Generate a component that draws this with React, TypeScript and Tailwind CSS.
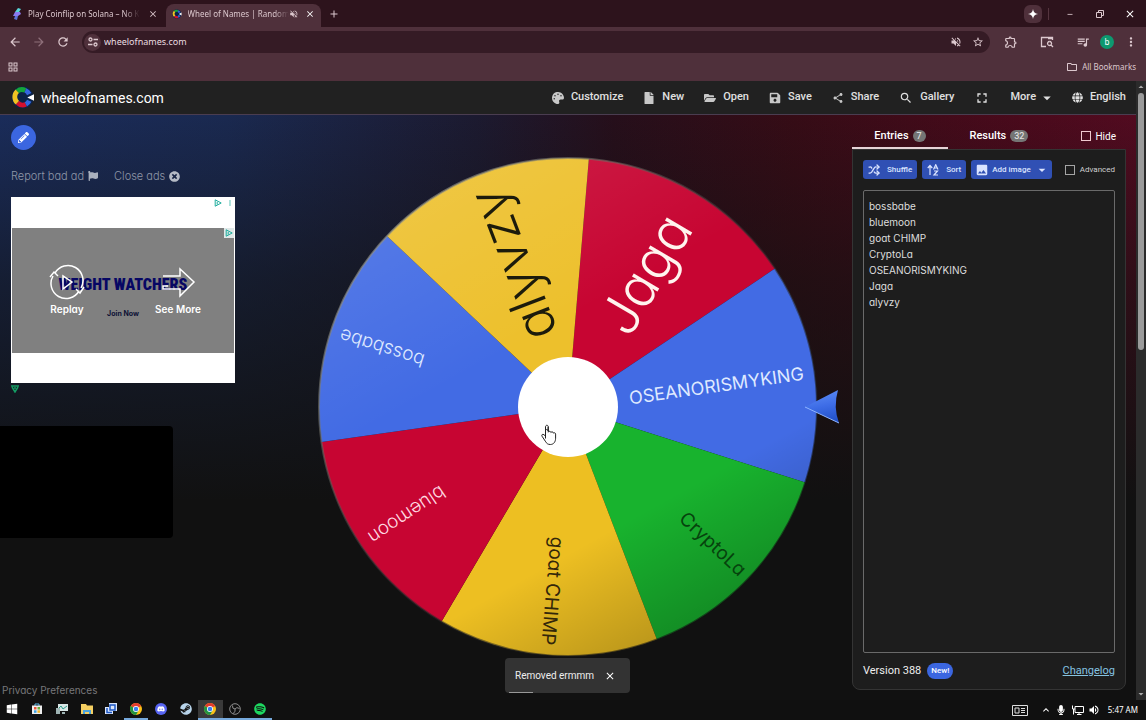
import {
  FaPalette, FaFile, FaFolderOpen, FaSave, FaPencilAlt, FaWindows, FaDiscord, FaSteam, FaSpotify, FaMicrophone, FaFlag, FaTimesCircle, FaGlobe,
} from "react-icons/fa";
import {
  MdShare, MdSearch, MdFullscreen, MdImage, MdArrowDropDown, MdArrowDropUp, MdClose, MdAdd,
  MdArrowBack, MdArrowForward, MdRefresh, MdOutlineExtension, MdStarBorder, MdVolumeOff, MdMoreVert, MdOutlineFolder, MdQueueMusic,
  MdOutlineGridView, MdMinimize, MdExpandLess, MdVolumeUp,
} from "react-icons/md";
import { Shuffle } from "lucide-react";

const round = "font-[Inter,'Liberation_Sans',sans-serif] [font-feature-settings:'cv11']";

type Slice = { name: string; color: string; ink: string; size: number; end: number; weight: number };

const slices: Slice[] = [
  { name: "Jaga", color: "#c70532", ink: "#fff4ee", size: 54, end: 218, weight: 300 },
  { name: "OSEANORISMYKING", color: "#426be4", ink: "#dfe9ff", size: 18, end: 238, weight: 400 },
  { name: "CryptoLa", color: "#18b32e", ink: "#06430d", size: 19, end: 241, weight: 400 },
  { name: "goat CHIMP", color: "#edbf22", ink: "#33270a", size: 19, end: 239, weight: 400 },
  { name: "bluemoon", color: "#c70532", ink: "#ffdbe2", size: 19, end: 238, weight: 300 },
  { name: "bossbabe", color: "#426be4", ink: "#dfe9ff", size: 19, end: 239, weight: 300 },
  { name: "alyvzy", color: "#edc02c", ink: "#1c1b0c", size: 52, end: 232, weight: 300 },
];

const START = -85.2;
const STEP = 360 / 7;
const R = 249;

function point(deg: number, r: number) {
  const a = (deg * Math.PI) / 180;
  return `${(255 + r * Math.cos(a)).toFixed(2)} ${(255 + r * Math.sin(a)).toFixed(2)}`;
}

function Wheel() {
  return (
    <svg viewBox="0 0 530 510" className="w-full max-w-[530px]" role="img" aria-label="Wheel">
      <defs>
        <linearGradient id="shade" x1="0.25" y1="0.05" x2="0.75" y2="0.95">
          <stop offset="0" stopColor="#fff" stopOpacity="0.1" />
          <stop offset="0.35" stopColor="#fff" stopOpacity="0" />
          <stop offset="0.75" stopColor="#000" stopOpacity="0" />
          <stop offset="1" stopColor="#000" stopOpacity="0.22" />
        </linearGradient>
        <linearGradient id="rim" x1="0" y1="0" x2="1" y2="1">
          <stop offset="0" stopColor="#b9b9a8" stopOpacity="0.7" />
          <stop offset="0.5" stopColor="#333" stopOpacity="0.5" />
          <stop offset="1" stopColor="#000" stopOpacity="0.6" />
        </linearGradient>
        <linearGradient id="arrow" x1="0.4" y1="0" x2="0.6" y2="1">
          <stop offset="0" stopColor="#5c8cf5" />
          <stop offset="0.5" stopColor="#3d6ce6" />
          <stop offset="1" stopColor="#2150c8" />
        </linearGradient>
      </defs>
      {slices.map((s, i) => {
        const a = START + i * STEP;
        return <path key={s.name} d={`M255 255L${point(a, R)}A${R} ${R} 0 0 1 ${point(a + STEP, R)}Z`} fill={s.color} />;
      })}
      <circle cx="255" cy="255" r={R} fill="url(#shade)" stroke="url(#rim)" strokeWidth="2" />
      {slices.map((s, i) => (
        <text
          key={s.name}
          transform={`translate(255 255) rotate(${START + (i + 0.5) * STEP})`}
          x={s.end}
          y={s.size * 0.34}
          textAnchor="end"
          fontSize={s.size}
          fontWeight={s.weight}
          fill={s.ink}
          className={round}
        >
          {s.name}
        </text>
      ))}
      <circle cx="255" cy="255" r="50" fill="#fff" />
      <path d="M492 255L525 238Q520 255 526 271Z" fill="url(#arrow)" />
      <path d="M492 255L526 271" stroke="#8fb4ff" strokeWidth="1" fill="none" />
      <path
        d="M232.500 286.500v-7.500c0-2 2.600-2 2.600 0v-4.200M232.500 284v-9c0-2.300 2.800-2.300 2.800 0v5.200c.3-1.300 2.500-1.100 2.600.3 .5-1 2.400-.8 2.500.6 .7-.7 2.200-.3 2.200 1v4.100c0 3.500-1.900 6.300-5.200 6.300-2.700 0-3.700-1-5.100-3.300l-3.300-5c-.8-1.500.8-2.600 2-1.400z"
        fill="#fff"
        stroke="#222"
        strokeWidth="1"
        strokeLinejoin="round"
      />
    </svg>
  );
}

function WheelLogo({ className }: { className: string }) {
  return (
    <svg viewBox="0 0 24 24" className={className} aria-hidden="true">
      <circle cx="12" cy="12" r="11.500" fill="#0b2348" />
      <g fill="none" strokeWidth="5">
        <path d="M6.500 5.500A8 8 0 0 1 15 4.600" stroke="#14a53a" />
        <path d="M6.800 17.500A8 8 0 0 1 6.500 5.500" stroke="#f0c322" />
        <path d="M15.500 19.200A8 8 0 0 1 6.800 17.500" stroke="#d5102f" />
        <path d="M15 4.600A8 8 0 0 1 19 8.500M19 15.500A8 8 0 0 1 15.500 19.200" stroke="#3466e0" />
      </g>
      <path d="M17 12L24 8.500V15.500Z" fill="#fff" />
    </svg>
  );
}

function Chrome({ className }: { className: string }) {
  return (
    <svg viewBox="0 0 24 24" className={className} aria-hidden="true">
      <circle cx="12" cy="12" r="12" fill="#fbc116" />
      <path d="M12 12L1.600 6A12 12 0 0 1 22.400 6Z" fill="#e33b2e" />
      <path d="M12 12L1.600 6A12 12 0 0 0 12 24L17.200 15Z" fill="#229342" />
      <circle cx="12" cy="12" r="6" fill="#fff" />
      <circle cx="12" cy="12" r="4.500" fill="#3b7ded" />
    </svg>
  );
}

function AdChoices({ className }: { className: string }) {
  return (
    <svg viewBox="0 0 10 10" className={className} fill="none" stroke="#16a99a" strokeWidth="1.200" aria-hidden="true">
      <path d="M1.500 1L9 5L1.500 9ZM4 3.500V7" />
    </svg>
  );
}

function SortIcon() {
  return (
    <svg viewBox="0 0 24 24" className="size-3" fill="none" stroke="currentColor" strokeWidth="2.400" aria-hidden="true">
      <path d="M6 22V3M1.500 8L6 3L10.500 8M13 11L17.500 1.500L22 11M14.500 8H20.500M14 14H21L14 22H22" />
    </svg>
  );
}

function SiteControls() {
  return (
    <svg viewBox="0 0 12 12" className="size-3" fill="none" stroke="currentColor" strokeWidth="1.300" aria-hidden="true">
      <circle cx="3.500" cy="3.500" r="1.500" />
      <circle cx="8.500" cy="8.500" r="1.500" />
      <path d="M6.500 3.500H11M1 8.500H5.500" />
    </svg>
  );
}

function Divider() {
  return <span className="h-3 w-px bg-[#7a5964]" />;
}

function BrowserChrome() {
  return (
    <div className="shrink-0 bg-[#4f303b] font-['Noto_Sans',sans-serif] text-[8px] text-[#dcc8ce]">
      <div className="flex h-[27px] items-center bg-[#2d131c]">
        <div className="flex h-full w-[166px] items-center gap-1.5 pr-2 pl-3">
          <svg viewBox="0 0 10 12" className="h-3 w-2.5" aria-hidden="true">
            <path d="M6 0L9 1L7 4H3Z" fill="#58d5d8" />
            <path d="M3 4H8L9 6L6 8H1Z" fill="#8a7af0" />
            <path d="M3 8H6L5 12L2 11Z" fill="#5a72d8" />
          </svg>
          <span className="whitespace-nowrap [mask-image:linear-gradient(90deg,#000_85%,transparent)]">Play Coinflip on Solana – No K</span>
          <button aria-label="Close Coinflip tab" className="ml-auto"><MdClose className="size-2.5" /></button>
        </div>
        <div className="mt-1 flex h-[23px] w-[155px] items-center rounded-t-lg bg-[#4f303b] pr-1.5 pb-1 pl-1.5">
          <WheelLogo className="size-2.5" />
          <span className="ml-1.5 whitespace-nowrap [mask-image:linear-gradient(90deg,#000_85%,transparent)]">Wheel of Names | Random</span>
          <MdVolumeOff className="ml-auto size-2.5" />
          <button aria-label="Close wheel tab" className="ml-1.5 text-white"><MdClose className="size-2.5" /></button>
        </div>
        <button aria-label="New tab" className="ml-[7px]"><MdAdd className="size-3" /></button>
        <div className="ml-auto flex items-center pr-2.5">
          <button aria-label="Assistant" className="grid size-[18px] place-items-center rounded-md bg-[#4f303b] text-white">
            <svg viewBox="0 0 10 10" className="size-2.5" fill="currentColor"><path d="M5 0Q5.500 4.500 10 5Q5.500 5.500 5 10Q4.500 5.500 0 5Q4.500 4.500 5 0Z" /></svg>
          </button>
          <span className="ml-1.5 h-3 w-px bg-[#55353f]" />
          <button aria-label="Minimize" className="ml-4"><MdMinimize className="mb-1.5 size-2.5" /></button>
          <button aria-label="Restore" className="ml-[21px]">
            <svg viewBox="0 0 8 8" className="size-2" fill="none" stroke="currentColor"><path d="M.5 2.500H5.500V7.500H.5ZM2.500 2.500V.5H7.500V5.500H5.500" /></svg>
          </button>
          <button aria-label="Close window" className="ml-5 text-white"><MdClose className="size-3" /></button>
        </div>
      </div>
      <div className="flex h-[30px] items-center pr-2 pl-2">
        <button aria-label="Back"><MdArrowBack className="size-3.5" /></button>
        <button aria-label="Forward" className="ml-2.5 text-[#8f707b]"><MdArrowForward className="size-3.5" /></button>
        <button aria-label="Reload" className="ml-2.5"><MdRefresh className="size-3.5" /></button>
        <div className="ml-3 flex h-[22px] flex-1 items-center rounded-full bg-[#351b25] pr-1.5 pl-0.5">
          <span className="grid size-[17px] place-items-center rounded-full bg-[#4f303b]"><SiteControls /></span>
          <input aria-label="Address" defaultValue="wheelofnames.com" className="ml-[3px] min-w-0 flex-1 bg-transparent text-[9px] text-[#eadde1] outline-none" />
          <MdVolumeOff className="size-3" />
          <MdStarBorder className="ml-2.5 size-3" />
        </div>
        <button aria-label="Extensions" className="ml-3.5"><MdOutlineExtension className="size-3.5" /></button>
        <span className="ml-2.5"><Divider /></span>
        <button aria-label="Side search" className="ml-3">
          <svg viewBox="0 0 14 12" className="h-3 w-3.5" fill="none" stroke="currentColor" strokeWidth="1.300"><path d="M6 10.500H1.500V1.500H12.500V4M8 2.500H12.500M9.500 5.500a2 2 0 1 0 .1 0M11 9L13 11" /></svg>
        </button>
        <span className="ml-2.5"><Divider /></span>
        <button aria-label="Media" className="ml-3"><MdQueueMusic className="size-3.5" /></button>
        <span className="ml-2.5 grid size-3.5 place-items-center rounded-full bg-[#0d9970] text-[8px] text-white">b</span>
        <button aria-label="Menu" className="ml-2.5"><MdMoreVert className="size-3.5" /></button>
      </div>
      <div className="flex h-6 items-center pr-2.5 pb-1 pl-[7px]">
        <button aria-label="Apps"><MdOutlineGridView className="size-3" /></button>
        <span className="ml-auto"><Divider /></span>
        <a href="#bookmarks" className="ml-2.5 flex items-center gap-1"><MdOutlineFolder className="size-3" />All Bookmarks</a>
      </div>
    </div>
  );
}

const navItems = [
  { label: "Customize", Icon: FaPalette },
  { label: "New", Icon: FaFile },
  { label: "Open", Icon: FaFolderOpen },
  { label: "Save", Icon: FaSave },
  { label: "Share", Icon: MdShare },
  { label: "Gallery", Icon: MdSearch },
];

function SiteHeader() {
  return (
    <header className="flex h-[33px] shrink-0 items-center bg-[#212121] pr-2.5 pl-[11px] text-[#e0e0e0]">
      <a href="#home" className="flex items-center gap-[7px] text-sm text-white">
        <WheelLogo className="size-[23px]" />
        wheelofnames.com
      </a>
      <nav className="ml-auto flex items-center gap-5 text-[11px] font-medium">
        {navItems.map(({ label, Icon }) => (
          <button key={label} className="flex items-center gap-[7px]">
            <Icon className={label === "Gallery" ? "size-3.5 text-[#dedede]" : "size-3 text-[#c8c8c8]"} />
            {label}
          </button>
        ))}
        <button aria-label="Fullscreen"><MdFullscreen className="size-4" /></button>
        <button className="flex items-center gap-0.5">More<MdArrowDropDown className="size-[18px]" /></button>
        <button className="-ml-1 flex items-center gap-[7px]"><FaGlobe className="size-[11px]" />English</button>
      </nav>
    </header>
  );
}

function AdColumn() {
  return (
    <aside className={`${round} flex w-[313px] shrink-0 flex-col items-start pt-2.5 text-[#8f97a8]`}>
      <button aria-label="Edit title" className="ml-[11px] grid size-[25px] place-items-center rounded-full bg-[#3b66e0] text-white">
        <FaPencilAlt className="size-[11px]" />
      </button>
      <div className="mt-[17px] ml-[11px] flex h-[18px] items-center gap-4 text-[11px] font-light">
        <button className="flex items-center gap-1">Report bad ad<FaFlag className="size-2.5 text-[#a9b0bd]" /></button>
        <button className="flex items-center gap-1">Close ads<FaTimesCircle className="size-[11px] text-[#b5bac5]" /></button>
      </div>
      <div className="mt-3 ml-[11px] flex h-[186px] w-[224px] flex-col bg-white px-px">
        <div className="flex h-[31px] justify-end gap-1 pt-0.5">
          <AdChoices className="size-2" />
          <MdMoreVert className="size-2 text-[#16a99a]" />
        </div>
        <div className="relative flex h-[125px] flex-col items-center bg-[#808080]">
          <span className="absolute top-0 right-0 bg-[#e0e8e8] p-px"><AdChoices className="size-2" /></span>
          <strong className="mt-[43px] font-['Liberation_Sans_Narrow','Roboto_Condensed','DejaVu_Sans_Condensed',sans-serif] text-base leading-[28px] font-black whitespace-nowrap text-[#070764]">WEIGHT WATCHERS</strong>
          <span className="mt-2.5 font-[Inter,sans-serif] text-[7px] leading-[10px] font-bold text-[#0c1034]">Join Now</span>
          <button className="absolute top-[36px] left-[35px] flex w-10 flex-col items-center font-[Inter,sans-serif] text-[10px] leading-[14px] font-semibold text-white">
            <svg viewBox="0 0 36 36" className="size-9" fill="none" stroke="currentColor" strokeWidth="1.500">
              <path d="M6 9A15 15 0 0 1 32 24M30 27A15 15 0 0 1 4 12M1 13L5 8L9 12M27 25L31 29L35 23M14 12V25L23 18Z" />
            </svg>
            <span className="mt-0.5">Replay</span>
          </button>
          <button className="absolute top-[36px] left-[138px] flex w-14 flex-col items-center font-[Inter,sans-serif] text-[10px] leading-[14px] font-semibold whitespace-nowrap text-white">
            <svg viewBox="0 0 36 36" className="size-9" fill="none" stroke="currentColor" strokeWidth="1.500">
              <path d="M3 12H20V5L34 18L20 32V25H3V22H8" />
            </svg>
            <span className="mt-0.5">See More</span>
          </button>
        </div>
      </div>
      <svg viewBox="0 0 8 8" className="mt-0.5 ml-[11px] size-2" fill="none" stroke="#149b63" strokeWidth="1.500"><path d="M0 1H8M1 2L4 7L7 2M4 2V4" /></svg>
      <div className="mt-[33px] h-28 w-[173px] rounded-r-sm bg-black" />
      <a href="#privacy" className="mt-auto pb-0.5 pl-0.5 text-[10px] text-[#77777a]">Privacy Preferences</a>
    </aside>
  );
}

const entryText = [5, 4, 3, 2, 1, 0, 6].map((i) => slices[i].name).join("\n");

function EntriesPanel() {
  return (
    <aside className="mt-2 mr-2.5 mb-2.5 flex w-[274px] shrink-0 flex-col">
      <div className="flex h-[26px] items-stretch text-[11px] font-medium text-white">
        <button className="flex w-24 items-center justify-center gap-1 border-b-2 border-[#e6d4d7] pt-0.5">
          Entries<span className="rounded-full bg-[#757575] px-1 text-[9px] leading-3 text-[#ddd]">7</span>
        </button>
        <button className="flex w-[102px] items-center justify-center gap-1">
          Results<span className="rounded-full bg-[#757575] px-1 text-[9px] leading-3 text-[#ddd]">32</span>
        </button>
        <label className="ml-auto flex items-center gap-1 pr-2.5 text-[10px] font-normal">
          <input type="checkbox" className="size-2.5 appearance-none border border-[#f0c8cf]" />Hide
        </label>
      </div>
      <div className="flex flex-1 flex-col rounded-b-lg border border-[#343434] bg-[#1d1d1d] px-2.5 pt-2.5">
        <div className="flex h-[19px] items-stretch gap-[5px] text-[8px] font-medium whitespace-nowrap text-[#dbe4ff]">
          <button className="flex items-center gap-[7px] rounded-[3px] bg-[#3050b4] px-[5px]"><Shuffle className="size-3" strokeWidth={2.5} />Shuffle</button>
          <button className="flex items-center gap-[7px] rounded-[3px] bg-[#3050b4] px-[5px]"><SortIcon />Sort</button>
          <button className="flex items-center gap-[3px] rounded-[3px] bg-[#3050b4] pr-0.5 pl-1"><MdImage className="size-3.5" />Add image<MdArrowDropDown className="size-4" /></button>
          <label className="ml-auto flex items-center gap-[5px] font-normal text-[#d0d0d0]">
            <input type="checkbox" className="size-2.5 appearance-none border border-[#a5a5a5]" />Advanced
          </label>
        </div>
        <textarea
          aria-label="Entries"
          defaultValue={entryText}
          spellCheck={false}
          className={`${round} mt-[11px] w-full flex-1 resize-none rounded-xs border border-[#6a6a6a] bg-transparent px-[5px] py-[7px] text-[10px] leading-4 text-[#dedede] outline-none`}
        />
        <div className="flex h-9 items-center text-[11px] text-[#eee]">
          Version 388
          <span className="ml-1.5 rounded-full bg-[#3b66e0] px-1 text-[8px] leading-4 font-medium text-white">New!</span>
          <a href="#changelog" className="ml-auto text-[#85c3e0] underline">Changelog</a>
        </div>
      </div>
    </aside>
  );
}

function Toast() {
  return (
    <div role="status" className="absolute bottom-[7px] left-[505px] flex h-[35px] w-[125px] items-center rounded bg-[#333] px-2.5 text-[10px] text-[#eee]">
      <span className="whitespace-nowrap">Removed ermmm</span>
      <button aria-label="Dismiss" className="mr-1 ml-auto text-white"><MdClose className="size-3" /></button>
      <span className="absolute bottom-0 left-1 h-px w-6 bg-[#999]" />
    </div>
  );
}

const cell = "grid h-full flex-1 place-items-center border-b-2";

function Taskbar() {
  return (
    <footer className="flex h-5 shrink-0 items-center bg-[#101010] text-white">
      <div className="flex h-full w-[272px]">
        <button aria-label="Start" className={`${cell} border-transparent`}><FaWindows className="size-3" /></button>
        <button aria-label="Store" className={`${cell} border-transparent`}>
          <svg viewBox="0 0 12 12" className="size-3"><path d="M4 3V1H8V3" fill="none" stroke="#5cb8ea" /><path d="M1 2.500H11V11H1Z" fill="#eee" /><path d="M3 4H5.500V6.500H3Z" fill="#e8543b" /><path d="M6.500 4H9V6.500H6.500Z" fill="#6cae3a" /><path d="M3 7.300H5.500V9.800H3Z" fill="#3aa0e0" /><path d="M6.500 7.300H9V9.800H6.500Z" fill="#f1b62c" /></svg>
        </button>
        <button aria-label="Monitor" className={`${cell} border-transparent`}>
          <svg viewBox="0 0 12 12" className="size-3"><path d="M2 1H12V8H2Z" fill="#d9e6e6" /><path d="M3 5L5 3L7 6L11 3" fill="none" stroke="#2b9c8b" /><path d="M0 5H4V11H0ZM6 9H9V11H6Z" fill="#9fb4b4" /></svg>
        </button>
        <button aria-label="Files" className={`${cell} border-transparent`}>
          <svg viewBox="0 0 12 12" className="size-3"><path d="M0 1H5L6 2.500H12V11H0Z" fill="#f5cf62" /><path d="M2 7H10V11H8V9H4V11H2Z" fill="#4ba3dc" /></svg>
        </button>
        <button aria-label="Remote" className={`${cell} border-transparent`}>
          <svg viewBox="0 0 12 12" className="size-3"><path d="M4 0H12V8H8V11H0V4H4Z" fill="#dbe6fb" /><path d="M5 2H10V7H5ZM2 5V9.500H7" fill="none" stroke="#1d57c4" strokeWidth="1.500" /></svg>
        </button>
        <button aria-label="Chrome" className={`${cell} border-[#76a9dc]`}><Chrome className="size-3" /></button>
        <button aria-label="Discord" className={`${cell} border-transparent`}>
          <span className="grid size-3 place-items-center rounded-full bg-[#5865f2]"><FaDiscord className="size-2" /></span>
        </button>
        <button aria-label="Steam" className={`${cell} border-transparent`}><FaSteam className="size-3 text-[#b8d4ea]" /></button>
        <button aria-label="Chrome window" className={`${cell} border-[#76a9dc] bg-[#3a3a3a]`}><Chrome className="size-3" /></button>
        <button aria-label="OBS" className={`${cell} border-[#76a9dc]`}>
          <svg viewBox="0 0 12 12" className="size-3" fill="none" stroke="#8d8d8d"><circle cx="6" cy="6" r="5.300" /><path d="M6 6Q3 6 3.500 2.500M6 6Q7.500 3.500 10.500 5.500M6 6Q7 9 4 10.500" /></svg>
        </button>
        <button aria-label="Spotify" className={`${cell} border-[#76a9dc]`}><FaSpotify className="size-3 text-[#1ed760]" /></button>
      </div>
      <div className="ml-auto flex items-center pr-2">
        <svg viewBox="0 0 16 11" className="h-[11px] w-4" fill="none" stroke="#ddd"><path d="M.5 .5H15.500V10.500H.5ZM3 3H7V8H3ZM9 3.500H13M9 5.500H13M9 7.500H13" /></svg>
        <MdExpandLess className="ml-3 size-3" />
        <FaMicrophone className="ml-1 size-2.5" />
        <svg viewBox="0 0 12 10" className="ml-1.5 h-2.5 w-3" fill="none" stroke="currentColor"><path d="M3 1.500H11.500V7.500H3ZM7 7.500V9.500M5 9.500H9.500M.5 .5V4H3M1.500 4V9.500" /></svg>
        <MdVolumeUp className="ml-1 size-3" />
        <time className="ml-2 font-['Noto_Sans',sans-serif] text-[8px] whitespace-nowrap">5:47 AM</time>
      </div>
    </footer>
  );
}

export default function App() {
  return (
    <div className="flex h-screen flex-col overflow-hidden bg-[#111] font-[Roboto,sans-serif]">
      <BrowserChrome />
      <div className="flex min-h-0 flex-1">
        <div className="flex min-w-0 flex-1 flex-col">
          <SiteHeader />
          <main className="relative flex min-h-0 flex-1 border-t border-[#4a3d50] bg-[linear-gradient(180deg,#11111100_0%,#11111188_28%,#111111_66%),linear-gradient(90deg,#1a2c5a_0%,#1a2950_20%,#1c1a30_42%,#260f1b_54%,#360c16_70%,#4a0a1c_90%,#520b20_100%)]">
            <AdColumn />
            <section className="flex min-w-0 flex-1 items-start pt-[37px]"><Wheel /></section>
            <EntriesPanel />
            <Toast />
          </main>
        </div>
        <div className="flex w-2.5 shrink-0 flex-col items-center bg-[#2b2b2b] text-[#aaa]">
          <MdArrowDropUp className="size-3" />
          <div className="h-[257px] w-1.5 rounded-full bg-[#9b9b9b]" />
          <MdArrowDropDown className="mt-auto size-3" />
        </div>
      </div>
      <Taskbar />
    </div>
  );
}
